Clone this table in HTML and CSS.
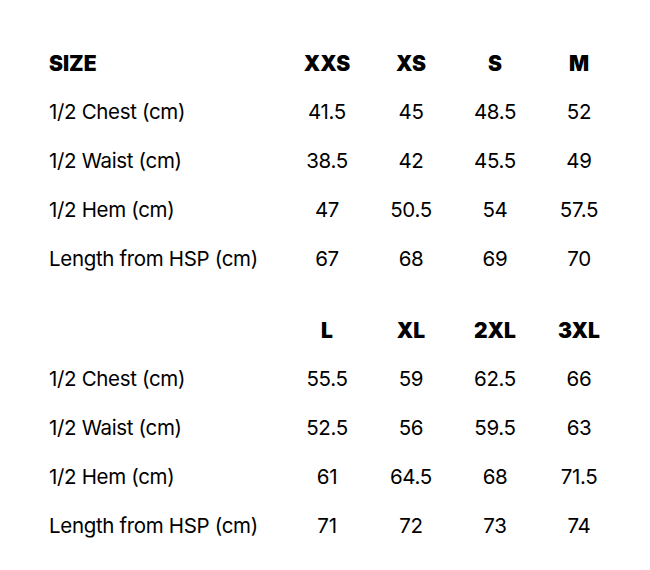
FILE: index.html
```html
<!DOCTYPE html>
<html>
<head>
<meta charset="utf-8">
<link rel="stylesheet" href="styles.css">
</head>
<body>
<div class="page">
  <div class="table">
    <div class="cell label head">SIZE</div>
    <div class="cell head">XXS</div>
    <div class="cell head">XS</div>
    <div class="cell head">S</div>
    <div class="cell head">M</div>

    <div class="cell label">1/2 Chest (cm)</div>
    <div class="cell">41.5</div>
    <div class="cell">45</div>
    <div class="cell">48.5</div>
    <div class="cell">52</div>

    <div class="cell label">1/2 Waist (cm)</div>
    <div class="cell">38.5</div>
    <div class="cell">42</div>
    <div class="cell">45.5</div>
    <div class="cell">49</div>

    <div class="cell label">1/2 Hem (cm)</div>
    <div class="cell">47</div>
    <div class="cell">50.5</div>
    <div class="cell">54</div>
    <div class="cell">57.5</div>

    <div class="cell label">Length from HSP (cm)</div>
    <div class="cell">67</div>
    <div class="cell">68</div>
    <div class="cell">69</div>
    <div class="cell">70</div>
  </div>

  <div class="table">
    <div class="cell label head"></div>
    <div class="cell head">L</div>
    <div class="cell head">XL</div>
    <div class="cell head">2XL</div>
    <div class="cell head">3XL</div>

    <div class="cell label">1/2 Chest (cm)</div>
    <div class="cell">55.5</div>
    <div class="cell">59</div>
    <div class="cell">62.5</div>
    <div class="cell">66</div>

    <div class="cell label">1/2 Waist (cm)</div>
    <div class="cell">52.5</div>
    <div class="cell">56</div>
    <div class="cell">59.5</div>
    <div class="cell">63</div>

    <div class="cell label">1/2 Hem (cm)</div>
    <div class="cell">61</div>
    <div class="cell">64.5</div>
    <div class="cell">68</div>
    <div class="cell">71.5</div>

    <div class="cell label">Length from HSP (cm)</div>
    <div class="cell">71</div>
    <div class="cell">72</div>
    <div class="cell">73</div>
    <div class="cell">74</div>
  </div>
</div>
</body>
</html>
```

FILE: styles.css
```css
html, body {
  margin: 0;
  padding: 0;
  background: #ffffff;
}

body {
  font-family: Inter, "Liberation Sans", sans-serif;
  color: #000000;
}

.page {
  padding: 39px 29px 0 49px;
  display: flex;
  flex-direction: column;
  gap: 22px;
}

.table {
  display: grid;
  grid-template-columns: 236px repeat(4, 84px);
  grid-auto-rows: 49px;
  align-items: center;
}

.cell {
  font-size: 20.5px;
  letter-spacing: -0.33px;
  text-align: center;
  line-height: 1;
}

.cell.label {
  text-align: left;
}

.cell.head {
  font-size: 21px;
  font-weight: 900;
  letter-spacing: 0;
}
```
